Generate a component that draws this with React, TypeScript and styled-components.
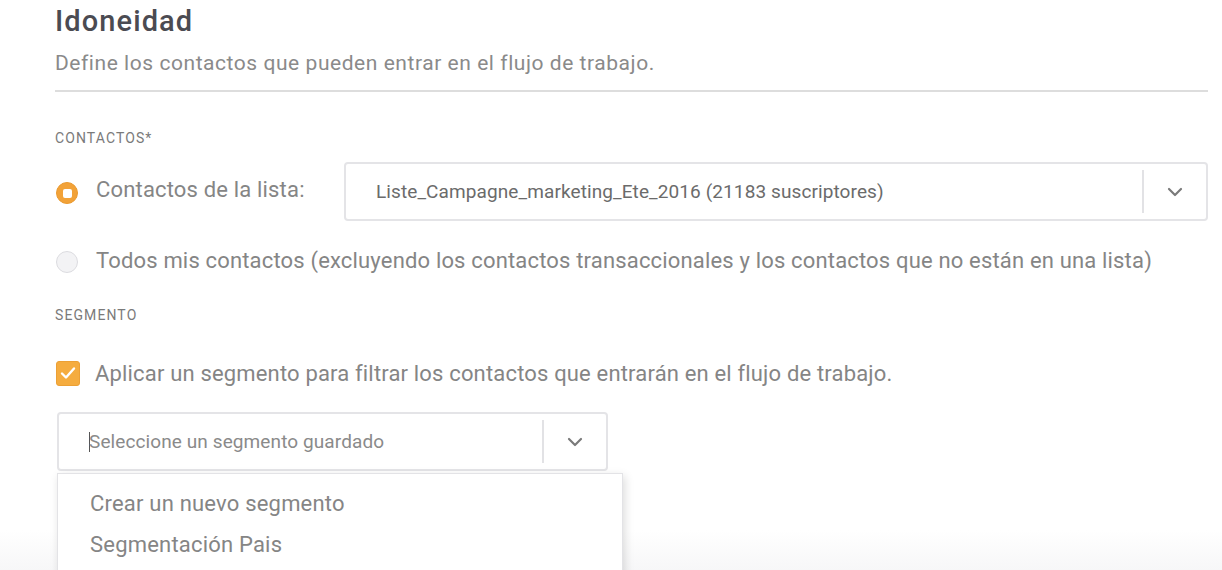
import styled, { createGlobalStyle } from "styled-components";

const GlobalStyle = createGlobalStyle`
    html, body {
        margin: 0;
        padding: 0;
        overflow: hidden;
    }
    body {
        font-family: Roboto, "Liberation Sans", Arial, sans-serif;
        background: #ffffff;
    }
`;

const Page = styled.div`
    height: 570px;
    overflow: hidden;
    background: linear-gradient(to bottom, #ffffff 0px, #ffffff 530px, #f7f7f8 570px);
`;

const Section = styled.div`
    width: 1153px;
    padding-left: 55px;
`;

const Title = styled.h1`
    margin: 0;
    padding-top: 4px;
    font-size: 29px;
    line-height: 34px;
    font-weight: 500;
    letter-spacing: 1.1px;
    color: #4b4b52;
`;

const Subtitle = styled.p`
    margin: 13px 0 0;
    font-size: 21px;
    line-height: 25px;
    letter-spacing: 0.55px;
    color: #8a8a8a;
`;

const Divider = styled.hr`
    margin: 14px 0 0;
    border: 0;
    height: 2px;
    background: #dddddd;
`;

const GroupLabel = styled.div<{ $top: number }>`
    margin-top: ${(p) => p.$top}px;
    font-size: 14px;
    line-height: 18px;
    letter-spacing: 1.1px;
    color: #7a7a7a;
    text-transform: uppercase;
`;

const OptionRow = styled.label<{ $height: number; $top: number }>`
    display: flex;
    align-items: center;
    height: ${(p) => p.$height}px;
    margin-top: ${(p) => p.$top}px;
    font-size: 22px;
    letter-spacing: 0.17px;
    color: #858585;
`;

const Radio = styled.span<{ $checked?: boolean }>`
    position: relative;
    flex: none;
    width: 22px;
    height: 22px;
    margin: 3px 18px 0 1px;
    box-sizing: border-box;
    border-radius: 50%;
    background: ${(p) => (p.$checked ? "#f2a238" : "#f3f3f5")};
    border: 1px solid ${(p) => (p.$checked ? "#ea9a30" : "#dcdce0")};

    &::after {
        content: "";
        display: ${(p) => (p.$checked ? "block" : "none")};
        position: absolute;
        left: 50%;
        top: 50%;
        width: 9px;
        height: 9px;
        margin: -4.5px 0 0 -4.5px;
        border-radius: 2px;
        background: #ffffff;
    }
`;

const Checkbox = styled.span`
    display: flex;
    align-items: center;
    justify-content: center;
    flex: none;
    width: 24px;
    height: 25px;
    margin: 0 15px 0 1px;
    box-sizing: border-box;
    border-radius: 3px;
    background: #f5ac3f;
    border: 1px solid #eca035;
`;

const OptionText = styled.span`
    white-space: nowrap;
`;

const ListLabel = styled.span`
    flex: none;
    width: 248px;
    white-space: nowrap;
    margin-top: -4px;
`;

const Select = styled.div<{ $width: number }>`
    display: flex;
    align-items: stretch;
    width: ${(p) => p.$width}px;
    height: 59px;
    box-sizing: border-box;
    border: 2px solid #e4e4e7;
    border-radius: 4px;
    background: #ffffff;
`;

const SelectValue = styled.div<{ $placeholder?: boolean }>`
    flex: 1;
    display: flex;
    align-items: center;
    padding-left: 30px;
    font-size: 19px;
    letter-spacing: 0.1px;
    color: ${(p) => (p.$placeholder ? "#8a8a8a" : "#6b6b6b")};
    white-space: nowrap;
`;

const Caret = styled.span`
    width: 1px;
    height: 20px;
    margin-right: -1px;
    background: #555555;
`;

const SelectToggle = styled.div`
    display: flex;
    align-items: center;
    justify-content: center;
    width: 62px;
    margin: 6px 0;
    border-left: 2px solid #e2e2e5;
`;

const SegmentArea = styled.div`
    position: relative;
    margin-top: 24px;
    margin-left: 2px;
`;

const Menu = styled.ul`
    position: absolute;
    left: 0;
    top: 61px;
    width: 566px;
    height: 140px;
    margin: 0;
    padding: 9px 0 0;
    list-style: none;
    box-sizing: border-box;
    background: #ffffff;
    border: 1px solid #e3e3e6;
    box-shadow: 2px 3px 9px rgba(0, 0, 0, 0.14);
`;

const MenuItem = styled.li`
    padding-left: 32px;
    height: 41px;
    line-height: 41px;
    font-size: 22px;
    letter-spacing: 0.2px;
    color: #858585;
`;

function Chevron() {
    return (
        <svg width="16" height="10" viewBox="0 0 16 10">
            <path d="M2 2 L8 8 L14 2" fill="none" stroke="#7a7a7a" strokeWidth="2.2" strokeLinecap="round" strokeLinejoin="round" />
        </svg>
    );
}

function Check() {
    return (
        <svg width="16" height="14" viewBox="0 0 16 14">
            <path d="M2 7.5 L6 11.5 L14 2.5" fill="none" stroke="#ffffff" strokeWidth="2.4" strokeLinecap="round" strokeLinejoin="round" />
        </svg>
    );
}

export default function App() {
    return (
        <Page>
            <GlobalStyle />
            <Section>
                <Title>Idoneidad</Title>
                <Subtitle>Define los contactos que pueden entrar en el flujo de trabajo.</Subtitle>
                <Divider />

                <GroupLabel $top={37}>Contactos*</GroupLabel>
                <OptionRow $height={59} $top={15}>
                    <Radio $checked />
                    <ListLabel>Contactos de la lista:</ListLabel>
                    <Select $width={864}>
                        <SelectValue>Liste_Campagne_marketing_Ete_2016 (21183 suscriptores)</SelectValue>
                        <SelectToggle>
                            <Chevron />
                        </SelectToggle>
                    </Select>
                </OptionRow>
                <OptionRow $height={30} $top={24}>
                    <Radio />
                    <OptionText>
                        Todos mis contactos (excluyendo los contactos transaccionales y los contactos que no están en una lista)
                    </OptionText>
                </OptionRow>

                <GroupLabel $top={31}>Segmento</GroupLabel>
                <OptionRow $height={30} $top={34}>
                    <Checkbox>
                        <Check />
                    </Checkbox>
                    <OptionText>Aplicar un segmento para filtrar los contactos que entrarán en el flujo de trabajo.</OptionText>
                </OptionRow>

                <SegmentArea>
                    <Select $width={551}>
                        <SelectValue $placeholder>
                            <Caret />
                            Seleccione un segmento guardado
                        </SelectValue>
                        <SelectToggle>
                            <Chevron />
                        </SelectToggle>
                    </Select>
                    <Menu>
                        <MenuItem>Crear un nuevo segmento</MenuItem>
                        <MenuItem>Segmentación Pais</MenuItem>
                    </Menu>
                </SegmentArea>
            </Section>
        </Page>
    );
}
